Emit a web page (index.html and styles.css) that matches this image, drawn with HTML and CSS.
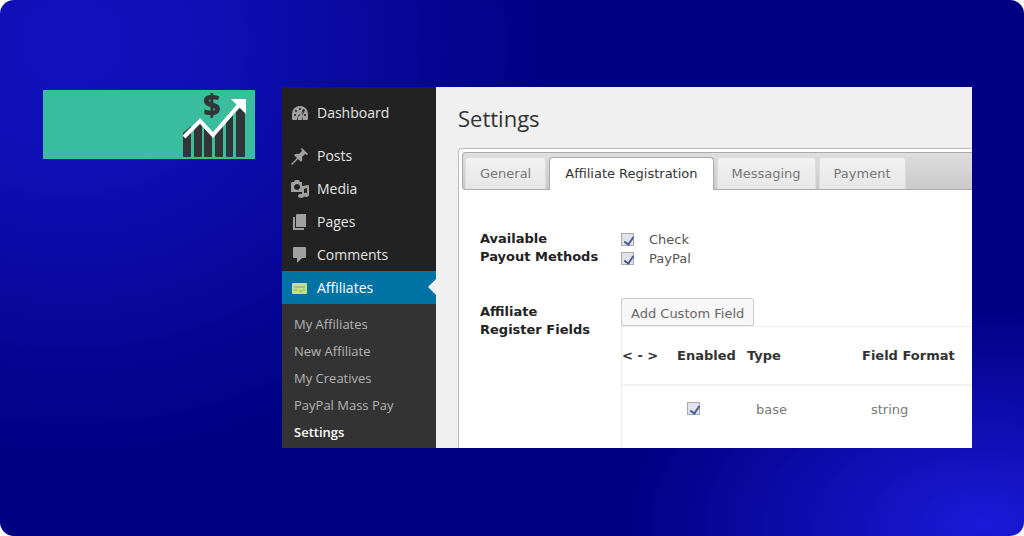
FILE: index.html
```
<!DOCTYPE html>
<html lang="en">
<head>
    <meta charset="UTF-8">
    <meta name="viewport" content="width=device-width, initial-scale=1.0">
    <title>Affiliates Settings</title>
    <link rel="stylesheet" href="styles.css">
</head>
<body>
    <div class="stage">
        <!-- Banner -->
        <div class="banner">
            <svg class="banner-logo" viewBox="0 0 66 66" width="66" height="66">
                <g fill="#333436">
                    <path d="M1 41l8-7v30q0 1-1 1H2q-1 0-1-1z"/>
                    <path d="M12 32l5-5 3 2v35q0 1-1 1h-6q-1 0-1-1z"/>
                    <path d="M22 31l8 10v23q0 1-1 1h-6q-1 0-1-1z"/>
                    <path d="M33 41l8-7v30q0 1-1 1h-6q-1 0-1-1z"/>
                    <path d="M44 31l7-8v41q0 1-1 1h-5q-1 0-1-1z"/>
                    <path d="M54 20l4-4 5 5v43q0 1-1 1h-7q-1 0-1-1z"/>
                </g>
                <path d="M2 45L18 29l13 14L57 13" fill="none" stroke="#fff" stroke-width="4"/>
                <path d="M49 7h15v15z" fill="#fff"/>
                <text x="30" y="24" text-anchor="middle" class="banner-dollar">$</text>
            </svg>
        </div>

        <!-- Admin window -->
        <div class="window">
            <nav class="sidebar">
                <ul class="menu">
                    <li>
                        <a href="#" class="menu-item">
                            <svg viewBox="0 0 18 18" class="icon"><path d="M1 15V10a8 8 0 0 1 16 0v5q0 1-1 1H2q-1 0-1-1z"/><g fill="#222"><circle cx="4" cy="11" r="1"/><circle cx="5" cy="7" r="1"/><circle cx="9" cy="5" r="1"/><circle cx="14" cy="11" r="1"/><path d="M12 5l2 1-3 6 1 4H6l1-4q1-2 3-2z"/></g><path d="M9 11l3-4-1 5v4H7v-3z"/></svg>
                            Dashboard
                        </a>
                    </li>
                    <li class="separator">
                        <a href="#" class="menu-item">
                            <svg viewBox="0 0 18 18" class="icon"><path d="M11 1l6 6-1 1-2-1-3 3q1 3-1 5l-3-3-6 6-1-1 6-6-3-3q2-2 5-1l3-3-1-2z"/></svg>
                            Posts
                        </a>
                    </li>
                    <li>
                        <a href="#" class="menu-item">
                            <svg viewBox="0 0 18 18" class="icon"><path fill-rule="evenodd" d="M1 2h2l1-2h4l1 2h2v10H0V3zM6 4a3 3 0 1 0 .1 0z"/><path d="M11 6l7-1v10a3 2 0 1 1-2-2V8l-3 1v7a3 2 0 1 1-2-2z"/></svg>
                            Media
                        </a>
                    </li>
                    <li>
                        <a href="#" class="menu-item">
                            <svg viewBox="0 0 18 18" class="icon"><path d="M6 1h9v13H5V2zM2 4h2v11h9v2H2z"/></svg>
                            Pages
                        </a>
                    </li>
                    <li>
                        <a href="#" class="menu-item">
                            <svg viewBox="0 0 18 18" class="icon"><path d="M3 1h11q1 0 1 1v9q0 1-1 1h-3l-5 5v-5H3q-1 0-1-1V2q0-1 1-1z"/></svg>
                            Comments
                        </a>
                    </li>
                    <li>
                        <a href="#" class="menu-item current">
                            <svg viewBox="0 0 18 18" class="icon"><rect x="1" y="4" width="15" height="11" rx="1" fill="#c5e08a"/><path d="M3 8h11M3 11h3m2 1h3m1-1h2" stroke="#7fae55" fill="none"/></svg>
                            Affiliates
                        </a>
                    </li>
                </ul>
                <ul class="submenu">
                    <li><a href="#">My Affiliates</a></li>
                    <li><a href="#">New Affiliate</a></li>
                    <li><a href="#">My Creatives</a></li>
                    <li><a href="#">PayPal Mass Pay</a></li>
                    <li><a href="#" class="selected">Settings</a></li>
                </ul>
            </nav>

            <main class="content">
                <h1>Settings</h1>
                <div class="panel">
                    <div class="tabs">
                        <button type="button" class="tab">General</button>
                        <button type="button" class="tab active">Affiliate Registration</button>
                        <button type="button" class="tab">Messaging</button>
                        <button type="button" class="tab">Payment</button>
                    </div>

                    <form class="settings">
                        <div class="setting">
                            <h2>Available<br>Payout Methods</h2>
                            <div class="options">
                                <label><input type="checkbox" checked>Check</label>
                                <label><input type="checkbox" checked>PayPal</label>
                            </div>
                        </div>
                        <div class="setting">
                            <h2 class="fields-title">Affiliate<br>Register Fields</h2>
                            <div class="fields">
                                <button type="button" class="add-field">Add Custom Field</button>
                                <table>
                                    <thead>
                                        <tr>
                                            <th class="col-move">&lt; - &gt;</th>
                                            <th class="col-enabled">Enabled</th>
                                            <th class="col-type">Type</th>
                                            <th>Field Format</th>
                                        </tr>
                                    </thead>
                                    <tbody>
                                        <tr>
                                            <td></td>
                                            <td class="enabled"><input type="checkbox" aria-label="Enabled" checked></td>
                                            <td>base</td>
                                            <td>string</td>
                                        </tr>
                                    </tbody>
                                </table>
                            </div>
                        </div>
                    </form>
                </div>
            </main>
        </div>
    </div>
</body>
</html>
```
FILE: styles.css
```
* {
    box-sizing: border-box;
}
body {
    margin: 0;
    background-color: #fff;
    font-family: "Open Sans", sans-serif;
}
ul {
    list-style: none;
    margin: 0;
    padding: 0;
}
a {
    text-decoration: none;
}
.stage {
    display: flex;
    align-items: flex-start;
    gap: 27px;
    min-height: 100vh;
    padding: 87px 52px 87px 43px;
    border-radius: 14px;
    background:
        radial-gradient(ellipse 480px 420px at 7% 8%, #1212c0, #1010b8 25%, transparent),
        radial-gradient(ellipse 360px 220px at 96% 98%, #1a1ad8, transparent),
        #000083;
}

/* Banner */
.banner {
    display: flex;
    justify-content: flex-end;
    flex: 0 0 212px;
    margin-top: 3px;
    padding: 2px 7px 1px;
    background-color: #3abd9f;
}
.banner-logo {
    display: block;
    overflow: visible;
}
.banner-dollar {
    font-family: "Open Sans", sans-serif;
    font-size: 30px;
    font-weight: 800;
    fill: #333436;
}

/* Window */
.window {
    display: flex;
    flex: 1;
    min-width: 0;
    background-color: #f0f0f0;
}
.sidebar {
    flex: 0 0 154px;
    padding-top: 9px;
    background-color: #222;
}
.separator {
    margin-top: 10px;
}
.menu-item {
    display: flex;
    align-items: center;
    gap: 8px;
    height: 33px;
    padding-left: 9px;
    color: #e4e4e4;
    font-size: 14px;
}
.icon {
    width: 18px;
    height: 18px;
    fill: #a0a0a0;
}
.current {
    position: relative;
    background-color: #0073a5;
    color: #fff;
}
.current::after {
    content: "";
    position: absolute;
    right: 0;
    top: 8px;
    border: 8px solid transparent;
    border-left: none;
    border-right-color: #f0f0f0;
}
.submenu {
    padding: 7px 0 2px;
    background-color: #333;
}
.submenu a {
    display: block;
    padding-left: 12px;
    color: #b4b4b4;
    font-size: 13px;
    line-height: 27px;
}
.submenu .selected {
    color: #fff;
    font-weight: 600;
}

/* Content */
.content {
    display: flex;
    flex-direction: column;
    flex: 1;
    min-width: 0;
    padding: 15px 0 0 22px;
    font-family: "DejaVu Sans", sans-serif;
    font-size: 13px;
    color: #555;
}
h1 {
    margin: 0 0 14px;
    color: #333;
    font-family: "Open Sans", sans-serif;
    font-size: 22px;
    font-weight: 400;
    line-height: 32px;
}
.panel {
    display: flex;
    flex-direction: column;
    flex: 1;
    padding: 3px 0 0 3px;
    border: 1px solid #bbb;
    border-width: 1px 0 0 1px;
    border-top-left-radius: 4px;
    background-color: #fff;
}
.tabs {
    display: flex;
    gap: 3px;
    height: 38px;
    padding: 4px 0 0 2px;
    border: 1px solid #aaa;
    border-right: none;
    border-radius: 4px 0 0 4px;
    background: linear-gradient(#dedede, #cacaca);
}
.tab {
    padding: 0 14px;
    border: 1px solid #ddd;
    border-bottom: none;
    border-radius: 4px 4px 0 0;
    background: linear-gradient(#f2f2f2, #e6e6e6);
    color: #777;
    font-family: inherit;
    font-size: 13px;
}
.tab.active {
    margin-bottom: -1px;
    padding: 0 15px 1px;
    border-color: #aaa;
    background: #fff;
    color: #333;
}
.settings {
    display: flex;
    flex-direction: column;
    flex: 1;
    padding: 40px 0 0 18px;
}
.setting {
    display: flex;
    align-items: flex-start;
}
.setting:last-child {
    flex: 1;
    align-items: stretch;
}
h2 {
    flex: 0 0 141px;
    margin: 0;
    color: #222;
    font-size: 13px;
    line-height: 18px;
}
.options {
    display: flex;
    flex-direction: column;
    margin-bottom: 30px;
}
.options label {
    display: flex;
    align-items: center;
    gap: 15px;
    height: 19px;
}
input[type="checkbox"] {
    appearance: none;
    position: relative;
    width: 13px;
    height: 13px;
    margin: 0;
    border: 1px solid #aaa;
    background-color: #e0e3ea;
}
input[type="checkbox"]:checked::after {
    content: "";
    position: absolute;
    left: 4px;
    top: 1px;
    width: 4px;
    height: 8px;
    border: solid #4c589c;
    border-width: 0 2px 2px 0;
    transform: rotate(35deg);
}
.fields-title {
    margin-top: 5px;
}
.fields {
    display: flex;
    flex-direction: column;
    align-items: flex-start;
    flex: 1;
    min-width: 0;
    border-left: 1px solid #eee;
}
.add-field {
    height: 28px;
    margin-left: -1px;
    padding: 3px 9px 0;
    border: 1px solid #ccc;
    border-radius: 3px;
    background-color: #f7f7f7;
    box-shadow: 0 1px 0 #ddd;
    color: #666;
    font-family: inherit;
    font-size: 13px;
}
table {
    width: 100%;
    border-top: 1px solid #eee;
    border-spacing: 0;
    table-layout: fixed;
}
th {
    height: 59px;
    padding: 0;
    border-bottom: 2px solid #f2f2f2;
    color: #333;
    text-align: left;
}
td {
    height: 47px;
    padding: 0 0 0 9px;
    color: #777;
}
.enabled {
    padding-left: 10px;
}
.col-move {
    width: 55px;
}
.col-enabled {
    width: 70px;
}
.col-type {
    width: 115px;
}
```
